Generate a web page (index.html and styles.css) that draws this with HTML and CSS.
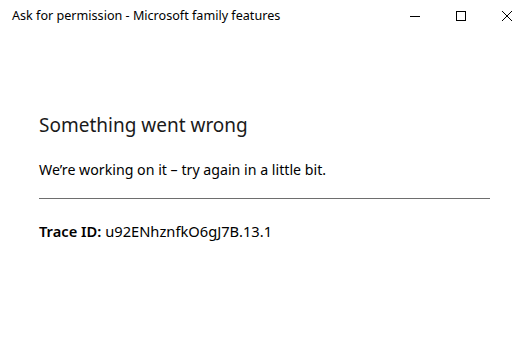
FILE: index.html
```html
<!DOCTYPE html>
<html lang="en">
<head>
    <meta charset="UTF-8">
    <title>Ask for permission - Microsoft family features</title>
    <link rel="stylesheet" href="styles.css">
</head>
<body>
    <div class="titlebar">
        <span class="title">Ask for permission - Microsoft family features</span>
        <div class="controls">
            <span class="ctl">
                <svg width="10" height="10" viewBox="0 0 10 10"><path d="M0 5.5h10" stroke="#000" stroke-width="1"/></svg>
            </span>
            <span class="ctl">
                <svg width="10" height="10" viewBox="0 0 10 10"><rect x="0.5" y="0.5" width="9" height="9" fill="none" stroke="#000" stroke-width="1"/></svg>
            </span>
            <span class="ctl">
                <svg width="10" height="10" viewBox="0 0 10 10"><path d="M0 0L10 10M10 0L0 10" stroke="#000" stroke-width="1"/></svg>
            </span>
        </div>
    </div>

    <div class="content">
        <h1>Something went wrong</h1>
        <p class="message">We’re working on it – try again in a little bit.</p>
        <hr class="divider">
        <p class="trace"><b>Trace ID:</b> u92ENhznfkO6gJ7B.13.1</p>
    </div>
</body>
</html>
```

FILE: styles.css
```css
body {
    margin: 0;
    background-color: #ffffff;
    color: #000000;
    font-family: 'Noto Sans', 'Open Sans', sans-serif;
    width: 530px;
    height: 361px;
    overflow: hidden;
}

.titlebar {
    display: flex;
    justify-content: space-between;
    align-items: center;
    height: 31px;
}

.title {
    font-size: 12.6px;
    padding-left: 12px;
    color: #000;
}

.controls {
    display: flex;
}

.ctl {
    display: flex;
    justify-content: center;
    align-items: center;
    width: 46px;
    height: 31px;
}

.content {
    padding: 81px 40px 0 39px;
}

.content h1 {
    font-size: 19px;
    font-weight: normal;
    margin: 0 0 22px 0;
    color: #1a1a1a;
}

.message {
    font-size: 14.2px;
    margin: 0 0 19px 0;
}

.divider {
    border: none;
    border-top: 1px solid #6e6e6e;
    margin: 0 0 22px 0;
}

.trace {
    font-size: 14.7px;
    margin: 0;
}

.trace b {
    font-weight: 600;
}
```
